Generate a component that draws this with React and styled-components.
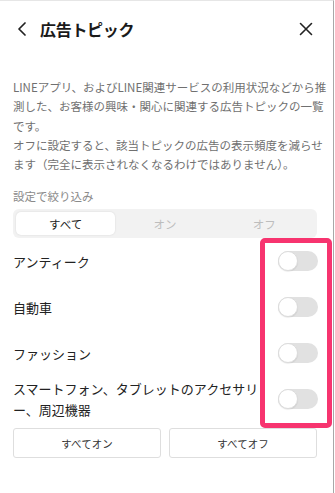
import React, { useState } from 'react';
import styled, { createGlobalStyle } from 'styled-components';

const GlobalStyle = createGlobalStyle`
  html, body {
    margin: 0;
    padding: 0;
    background: #fff;
  }
  body {
    font-family: "Noto Sans CJK JP", "Noto Sans", sans-serif;
    color: #222;
  }
`;

const Screen = styled.div`
  position: relative;
  width: 333px;
  height: 492px;
  border-top: 1px solid #e6e6e6;
  border-right: 1px solid #a8a8a8;
  background: #fff;
  overflow: hidden;
`;

const Header = styled.header`
  height: 55px;
  display: flex;
  align-items: center;
  padding: 0 19px 0 14px;
`;

const IconButton = styled.button`
  border: none;
  background: none;
  padding: 0;
  width: 16px;
  height: 16px;
  display: flex;
  align-items: center;
  justify-content: center;
  color: #222;
  cursor: pointer;
`;

const Title = styled.h1`
  flex: 1;
  margin: 0 0 0 10px;
  font-size: 16px;
  font-weight: 700;
  letter-spacing: -0.3px;
  color: #1a1a1a;
`;

const Description = styled.p`
  margin: 22px 0 0;
  padding: 0 6px 0 13px;
  font-size: 11.5px;
  line-height: 19.3px;
  color: #707070;
`;

const FilterLabel = styled.div`
  margin-top: 14px;
  padding-left: 13px;
  font-size: 11.5px;
  line-height: 17px;
  color: #8a8a8a;
`;

const Segmented = styled.div`
  margin: 4px 16px 0 13px;
  height: 29px;
  background: #f2f2f2;
  border-radius: 6px;
  padding: 3px;
  box-sizing: border-box;
  display: grid;
  grid-template-columns: repeat(3, 1fr);
`;

const Segment = styled.button`
  border: none;
  border-radius: 5px;
  font-family: inherit;
  font-size: 11.5px;
  padding: 0;
  cursor: pointer;
  background: ${(p) => (p.$active ? '#fff' : 'transparent')};
  color: ${(p) => (p.$active ? '#222' : '#bdbdbd')};
  box-shadow: ${(p) => (p.$active ? '0 0 2px rgba(0,0,0,0.12)' : 'none')};
`;

const List = styled.ul`
  list-style: none;
  margin: 0;
  padding: 0;
`;

const Row = styled.li`
  height: 46px;
  display: flex;
  align-items: center;
  gap: 12px;
  padding: 0 15px 0 13px;
`;

const RowLabel = styled.span`
  flex: 1;
  font-size: 13px;
  line-height: 21px;
  color: #222;
`;

const Track = styled.button`
  position: relative;
  flex: none;
  width: 40px;
  height: 20px;
  border: none;
  padding: 0;
  border-radius: 10px;
  background: ${(p) => (p.$on ? '#06c755' : '#e1e1e1')};
  cursor: pointer;
`;

const Knob = styled.span`
  position: absolute;
  top: 0;
  left: ${(p) => (p.$on ? '20px' : '0')};
  width: 20px;
  height: 20px;
  border-radius: 50%;
  background: #fff;
  box-sizing: border-box;
  border: 1px solid #dcdcdc;
  box-shadow: 0 1px 1px rgba(0,0,0,0.08);
`;

const Actions = styled.div`
  display: grid;
  grid-template-columns: 1fr 1fr;
  gap: 8px;
  margin: 6px 16px 0 13px;
`;

const ActionButton = styled.button`
  height: 30px;
  border: 1px solid #dedede;
  border-radius: 3px;
  background: #fff;
  font-family: inherit;
  font-size: 10.5px;
  color: #333;
  cursor: pointer;
`;

const Highlight = styled.div`
  position: absolute;
  left: 260px;
  top: 237px;
  width: 72px;
  height: 190px;
  box-sizing: border-box;
  border: 5px solid #f7346f;
  border-radius: 5px;
  pointer-events: none;
`;

const topics = [
  'アンティーク',
  '自動車',
  'ファッション',
  'スマートフォン、タブレットのアクセサリー、周辺機器',
];

export default function App() {
  const [filter, setFilter] = useState(0);
  const [state, setState] = useState(topics.map(() => false));

  const toggle = (i) => setState((s) => s.map((v, j) => (j === i ? !v : v)));

  return (
    <>
      <GlobalStyle />
      <Screen>
        <Header>
          <IconButton aria-label="戻る">
            <svg width="10" height="14" viewBox="0 0 10 14" fill="none">
              <path d="M8 1L2 7l6 6" stroke="#222" strokeWidth="1.7" strokeLinecap="round" strokeLinejoin="round" />
            </svg>
          </IconButton>
          <Title>広告トピック</Title>
          <IconButton aria-label="閉じる">
            <svg width="14" height="14" viewBox="0 0 14 14" fill="none">
              <path d="M1.5 1.5l11 11M12.5 1.5l-11 11" stroke="#222" strokeWidth="1.6" strokeLinecap="round" />
            </svg>
          </IconButton>
        </Header>

        <Description>
          LINEアプリ、およびLINE関連サービスの利用状況などから推測した、お客様の興味・関心に関連する広告トピックの一覧です。
          <br />
          オフに設定すると、該当トピックの広告の表示頻度を減らせます（完全に表示されなくなるわけではありません）。
        </Description>

        <FilterLabel>設定で絞り込み</FilterLabel>
        <Segmented>
          {['すべて', 'オン', 'オフ'].map((label, i) => (
            <Segment key={label} $active={filter === i} onClick={() => setFilter(i)}>
              {label}
            </Segment>
          ))}
        </Segmented>

        <List>
          {topics.map((t, i) => (
            <Row key={t}>
              <RowLabel>{t}</RowLabel>
              <Track $on={state[i]} onClick={() => toggle(i)} aria-label={t}>
                <Knob $on={state[i]} />
              </Track>
            </Row>
          ))}
        </List>

        <Actions>
          <ActionButton onClick={() => setState(topics.map(() => true))}>すべてオン</ActionButton>
          <ActionButton onClick={() => setState(topics.map(() => false))}>すべてオフ</ActionButton>
        </Actions>

        <Highlight />
      </Screen>
    </>
  );
}
